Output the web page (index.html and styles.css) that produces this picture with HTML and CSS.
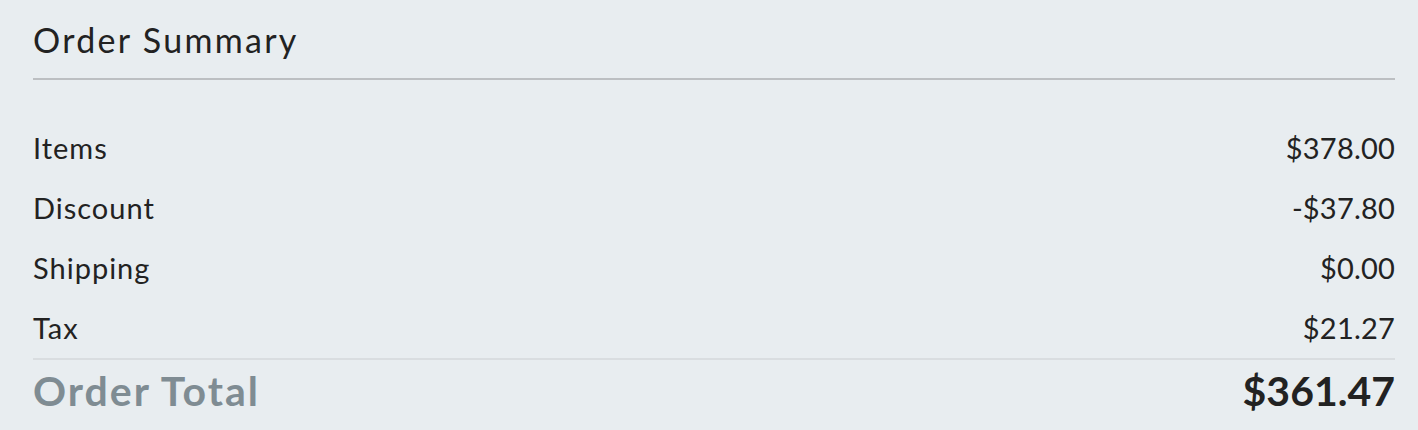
FILE: index.html
```html
<!DOCTYPE html>
<html>
<head>
<meta charset="utf-8">
<link rel="stylesheet" href="styles.css">
</head>
<body>
<section class="summary">
  <h2 class="summary-title">Order Summary</h2>
  <div class="summary-rows">
    <div class="row"><span>Items</span><span>$378.00</span></div>
    <div class="row"><span>Discount</span><span>-$37.80</span></div>
    <div class="row"><span>Shipping</span><span>$0.00</span></div>
    <div class="row"><span>Tax</span><span>$21.27</span></div>
  </div>
  <div class="total"><span class="total-label">Order Total</span><span class="total-value">$361.47</span></div>
</section>
</body>
</html>
```
FILE: styles.css
```css
html, body { margin: 0; padding: 0; background: #e8edf0; }
body { font-family: Lato, "Open Sans", sans-serif; color: #222; }
.summary { padding: 0 23px 0 33px; }
.summary-title {
  margin: 0;
  font-weight: 400;
  font-size: 34px;
  line-height: 40px;
  letter-spacing: 2.3px;
  padding-top: 20px;
  padding-bottom: 18px;
  border-bottom: 2px solid #bcbfc2;
}
.summary-rows { padding-top: 38px; }
.row {
  display: flex;
  justify-content: space-between;
  font-size: 29px;
  line-height: 60px;
  letter-spacing: 1px;
}
.row span:last-child { letter-spacing: 0.2px; }
.total {
  display: flex;
  justify-content: space-between;
  border-top: 2px solid #d9dde0;
  line-height: 62px;
  font-weight: 700;
  font-size: 41px;
}
.total-label { color: #7f8c93; letter-spacing: 2px; }
.total-value { color: #222; letter-spacing: 0; }
```
